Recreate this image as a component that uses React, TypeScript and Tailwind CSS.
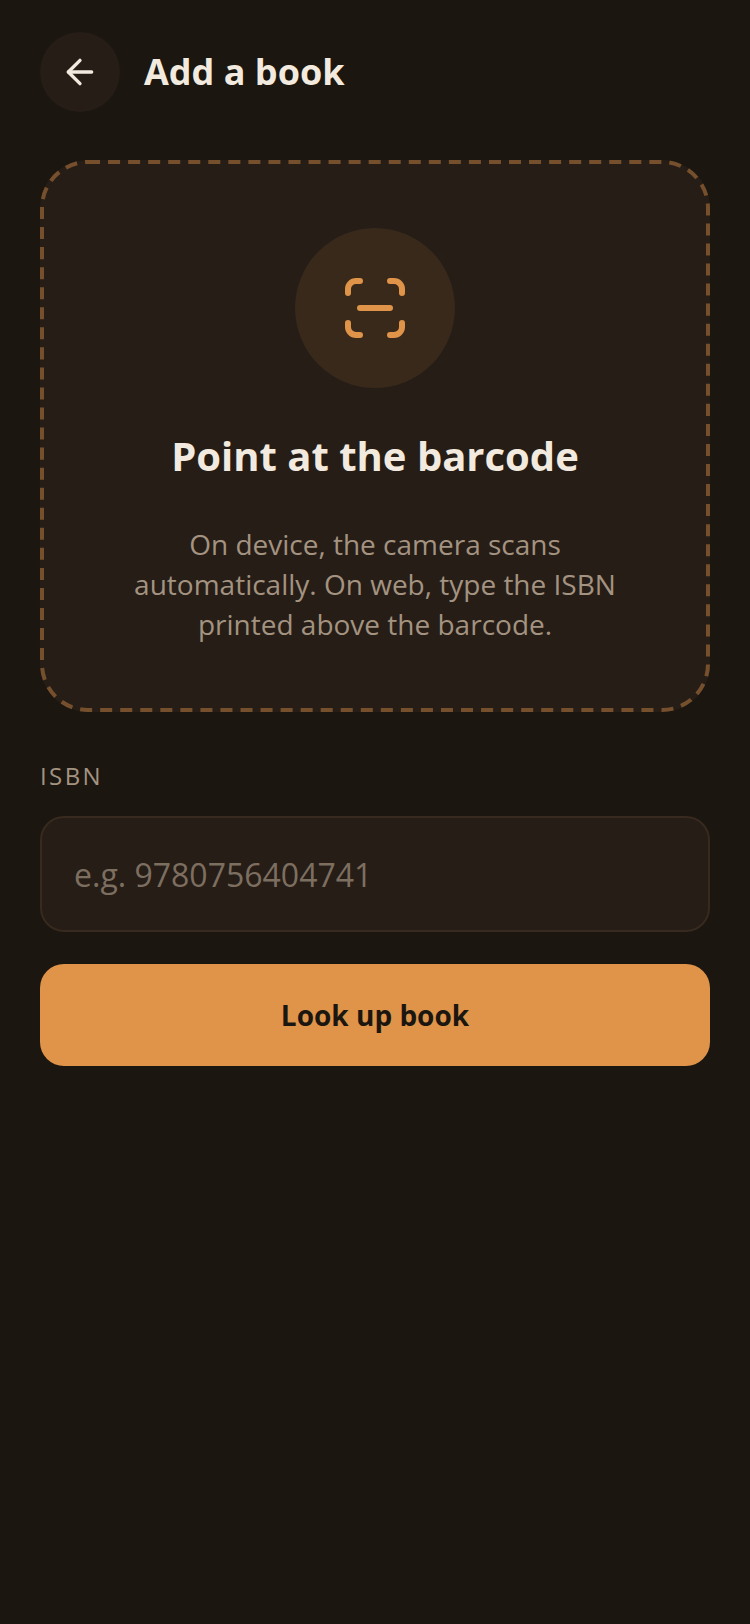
import { ArrowLeft } from 'lucide-react';

const ScanIcon = () => (
  <svg className="size-20" viewBox="0 0 80 80" fill="none" stroke="currentColor" strokeWidth="6" strokeLinecap="round" aria-hidden="true">
    <path d="M13 25v-4a8 8 0 0 1 8-8h4" />
    <path d="M55 13h4a8 8 0 0 1 8 8v4" />
    <path d="M67 55v4a8 8 0 0 1-8 8h-4" />
    <path d="M25 67h-4a8 8 0 0 1-8-8v-4" />
    <path d="M25 40h30" />
  </svg>
);

const Header = () => (
  <header className="flex items-center gap-6">
    <button type="button" aria-label="Go back" className="flex size-20 items-center justify-center rounded-full bg-[#261d17]">
      <ArrowLeft className="size-10" strokeWidth={2} />
    </button>
    <h1 className="text-[36px] leading-[48px] font-bold">Add a book</h1>
  </header>
);

const ScanPanel = () => (
  <section className="relative mt-12 flex flex-col items-center rounded-[48px] bg-[#261d17] px-20 py-[68px] text-center">
    {/* dashed outline */}
    <svg className="pointer-events-none absolute inset-0.5 h-[calc(100%-4px)] w-[calc(100%-4px)] overflow-visible" aria-hidden="true">
      <rect
        width="100%"
        height="100%"
        rx="46"
        fill="none"
        stroke="#76502d"
        strokeWidth="4"
        strokeDasharray="12 8"
        pathLength={2343}
      />
    </svg>
    <div className="flex size-40 items-center justify-center rounded-full bg-[#38291b] text-[#df9449]">
      <ScanIcon />
    </div>
    <h2 className="mt-10 text-[40px] leading-[56px] font-bold">Point at the barcode</h2>
    <p className="mt-10 text-[28px] leading-[40px] text-[#a39380]">
      On device, the camera scans automatically. On web, type the ISBN printed above the barcode.
    </p>
  </section>
);

const IsbnForm = () => (
  <form className="mt-12 flex flex-col" onSubmit={(e) => e.preventDefault()}>
    <label htmlFor="isbn" className="text-[24px] leading-[32px] tracking-widest text-[#a39380]">
      ISBN
    </label>
    <input
      id="isbn"
      type="text"
      inputMode="numeric"
      placeholder="e.g. 9780756404741"
      className="mt-6 h-[116px] w-full rounded-3xl border-2 border-[#382a1e] bg-[#261d17] px-8 text-[32px] outline-none placeholder:text-[#7d6f60]"
    />
    <button type="submit" className="mt-8 h-[102px] rounded-3xl bg-[#df9449] text-[28px] font-bold text-[#1b1610]">
      Look up book
    </button>
  </form>
);

export default function App() {
  return (
    <main className="min-h-screen bg-[#1b1610] px-10 pt-8 pb-10 font-['Open_Sans',sans-serif] text-[#f3eadf]">
      <Header />
      <ScanPanel />
      <IsbnForm />
    </main>
  );
}
